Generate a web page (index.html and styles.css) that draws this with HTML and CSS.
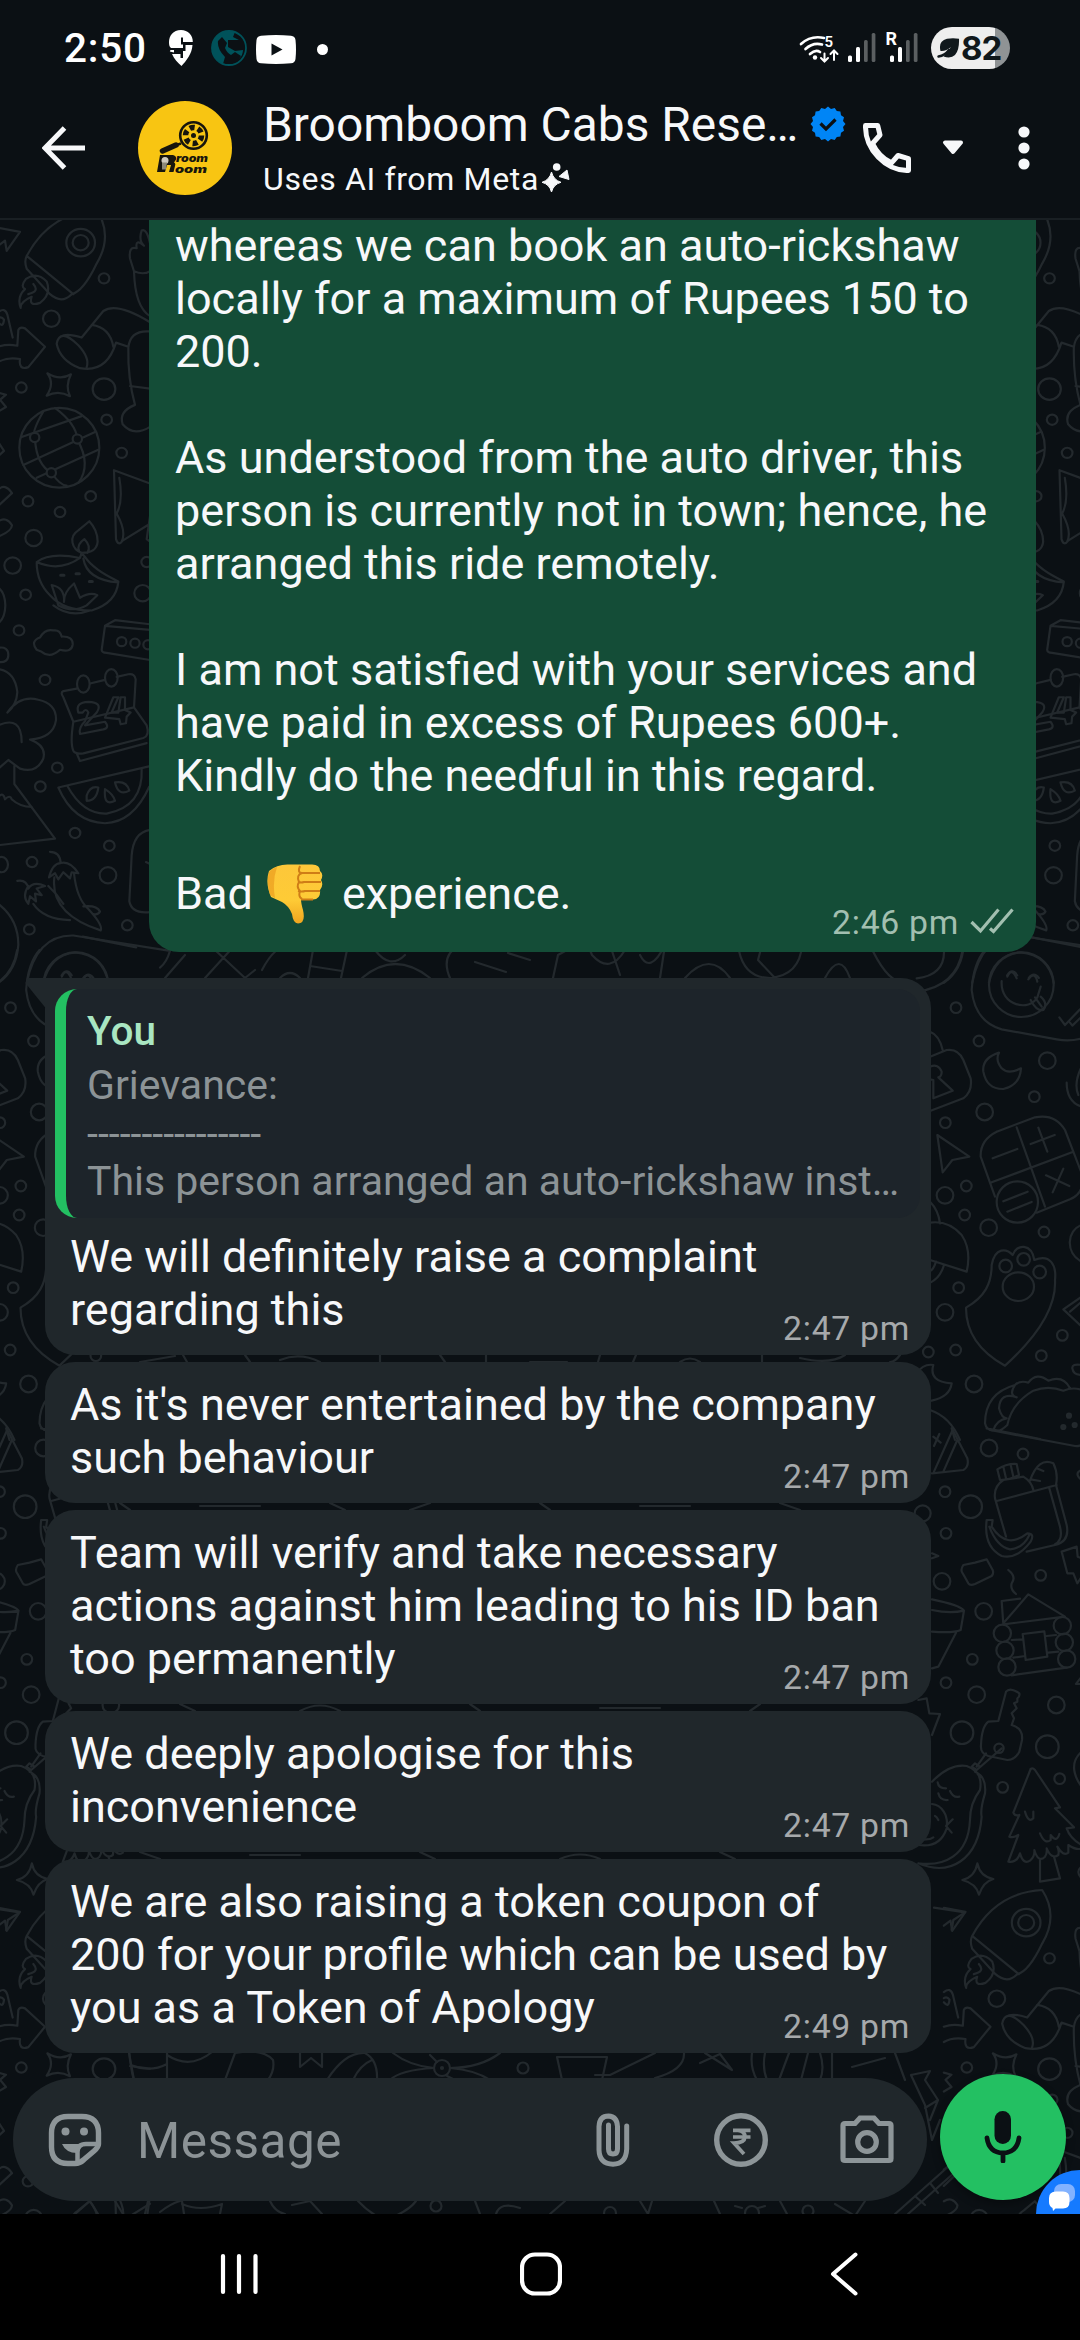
FILE: index.html
```html
<!DOCTYPE html>
<html lang="en">
<head>
<meta charset="utf-8">
<title>Broomboom Cabs Reservation</title>
<link rel="stylesheet" href="styles.css">
</head>
<body>
<div class="statusbar">
  <div class="status-left">
    <span class="clock">2:50</span>
    <svg class="pin" width="24" height="36" viewBox="0 0 24 36"><path d="M12 0C4 0 0 6 0 12c0 4 1 5 2 6h12v-3.500H12V7.500h2v4.500h9.800C24 5 19 0 12 0zM5 22.500V20h-3.500L.8 21.500zM3 24C5 29 9 33 12.500 36 17 31 23 24 23.500 15h-7v6H14v7h-2.500V24z" fill="#fff"/></svg>
    <svg class="dialer" width="36" height="36" viewBox="0 0 36 36"><circle cx="18" cy="18" r="17" fill="none" stroke="#00525a" stroke-width="1.800"/><path d="M18 1A17 17 0 0 0 12 34L14 27Q6 19 7 11L11 7 16 13 14 18Q16 23 20 25L24 22 30 26 28 29Q32 25 32 20L24 21 17 17V10H28L22 7 24 2z" fill="#00525a"/></svg>
    <svg class="tube" width="40" height="29" viewBox="0 0 40 29"><path d="M5 .7Q20-.7 35 .7 39 1 39.500 5q1 9.500 0 19-.5 4-4.500 4.300-15 1.400-30 0Q1 28 .5 24q-1-9.500 0-19Q1 1 5 .7z" fill="#fff"/><path d="M15.500 8.500v12L26.500 14.500z" fill="#0b1014"/></svg>
    <span class="more-dot"></span>
  </div>
  <div class="status-right">
    <svg width="122" height="46" viewBox="0 -6 122 46">
      <g fill="none" stroke="#fff" stroke-width="2.700" stroke-linecap="round"><path d="M2 13Q12 4 25 7M6.500 18Q14 11 23 13.500M11 23q5.500-5 10-2"/><path d="M25.500 22.500v8m-3.500-3.500 3.500 3.500 3.500-3.500M35 29v-9.500m-3.500 3.500 3.500-3.500 3.500 3.500" stroke-width="2"/></g>
      <circle cx="16" cy="26.500" r="2.200" fill="#fff"/>
      <text x="25.500" y="16" class="wifi-gen">5</text>
      <g fill="#fff"><rect x="49" y="24.500" width="4" height="6.500" rx="1.500"/><rect x="57" y="16" width="4" height="15" rx="1.500"/><rect x="91" y="24.500" width="4" height="6.500" rx="1.500"/><rect x="99" y="16" width="4" height="15" rx="1.500"/></g>
      <g fill="#5b5f61"><rect x="65" y="9" width="3.700" height="22" rx="1.500"/><rect x="72.700" y="2" width="3.700" height="29" rx="1.500"/><rect x="107" y="9" width="3.700" height="22" rx="1.500"/><rect x="114.800" y="2" width="3.700" height="29" rx="1.500"/></g>
      <text x="86.500" y="14" class="roaming">R</text>
    </svg>
    <div class="battery">
      <svg width="23" height="20" viewBox="0 0 23 20"><path d="M3.500 13Q1 3 10 .8 16-.5 22 .8 22.500 12 18 17q-4 4-11.500 1.500L14 9Q9 13.500 3.500 13z" fill="#10181c"/><path d="M1.500 18.500Q8 17.500 12 12" fill="none" stroke="#10181c" stroke-width="2.500" stroke-linecap="round"/></svg>
      <span>82</span>
    </div>
  </div>
</div>

<header class="appbar">
  <svg class="back" width="44" height="44" viewBox="0 0 44 44"><path d="M43 22H3.500M22.500 2 3 22l19.500 20" fill="none" stroke="#f7f8fa" stroke-width="5"/></svg>
  <svg class="avatar" width="94" height="94" viewBox="0 0 94 94">
    <circle cx="47" cy="47" r="47" fill="#f8c512"/>
    <circle cx="55.500" cy="34.500" r="13.300" fill="#f8c512" stroke="#17150d" stroke-width="2.600"/>
    <circle cx="55.500" cy="34.500" r="8" fill="none" stroke="#17150d" stroke-width="5.500" stroke-dasharray="5 3.400"/>
    <circle cx="55.500" cy="34.500" r="2.500" fill="#17150d"/>
    <path d="M43 42.500 38.500 44" stroke="#17150d" stroke-width="2.500"/><path d="M38 44 24.500 50" stroke="#17150d" stroke-width="5.500" stroke-linecap="round"/>
    <path d="M22 54h13q4 1 3 4.500l-2 3q2 1 1 3.500l-1.500 6H31l2-7h-4l-2 7h-8z" fill="#17150d"/><circle cx="27" cy="59.500" r="3.500" fill="#cfcabd"/><path d="M24 61.500h5l-1 7h-4z" fill="#8d8978"/>
    <text x="38" y="60.500" class="logo" textLength="32" lengthAdjust="spacingAndGlyphs">room</text><text x="37" y="71.500" class="logo" textLength="32" lengthAdjust="spacingAndGlyphs">oom</text>
  </svg>
  <div class="titles">
    <div class="title-row"><span class="title">Broomboom Cabs Rese…</span>
      <svg width="36" height="36" viewBox="-18 -18 36 36"><path d="M0-17.500 3-15 6.700-16 8.800-13 12.400-12.400 13-8.800 16-6.700 15-3 17.500 0 15 3 16 6.700 13 8.800 12.400 12.400 8.800 13 6.700 16 3 15 0 17.500-3 15-6.700 16-8.800 13-12.400 12.400-13 8.800-16 6.700-15 3-17.500 0-15-3-16-6.700-13-8.800-12.400-12.400-8.800-13-6.700-16-3-15z" fill="#0085f6"/><path d="M-7.500-.5-2 5 7.500-4.500" fill="none" stroke="#0b1014" stroke-width="3.200"/></svg>
    </div>
    <div class="subtitle"><span>Uses AI from Meta</span><svg width="28" height="29" viewBox="0 0 28 29"><path d="M9.500 9Q11.500 17 19 19.300 11.500 21.300 9.500 29 7.500 21.300 0 19.300 7.500 17 9.500 9z" fill="#f7f8fa" stroke="#f7f8fa"/><circle cx="14.700" cy="4" r="3.800" fill="#f7f8fa"/><path d="M25 7 17 13.500 27 16.500z" fill="#f7f8fa" stroke="#f7f8fa" stroke-linejoin="round"/></svg></div>
  </div>
  <svg class="call" width="48" height="50" viewBox="0 0 48 50"><path d="M2.500 2.500h12.200L17 12l-7.500 8.500C13.500 29 20 36 28.500 39.800L35 32.500l10.500 3.200v11.800C23 48 2 27 2.500 2.500z" fill="none" stroke="#f7f8fa" stroke-width="5" stroke-linejoin="round"/></svg>
  <svg class="caret" width="22" height="15" viewBox="0 0 22 15"><path d="M3 2.500h16L11 12z" fill="#f7f8fa" stroke="#f7f8fa" stroke-width="4" stroke-linejoin="round"/></svg>
  <svg class="menu" width="12" height="44" viewBox="0 0 12 44"><g fill="#f7f8fa"><circle cx="6" cy="6" r="5.600"/><circle cx="6" cy="22" r="5.600"/><circle cx="6" cy="38" r="5.600"/></g></svg>
</header>

<main class="chat">
  <svg class="wallpaper" width="1080" height="1994" viewBox="0 220 1080 1994">
    <defs>
      <g id="upper" transform="translate(0 210) scale(.33333 .5102)">
        <path d="M-5 35 60 43 20 80 15 60-5 70M80 90Q150 5 290 0 340 50 290 105 250 160 215 165 185 185 150 165L80 115Q72 100 80 90L220 165M78 135Q110 120 140 140 155 165 120 182 85 190 95 170 60 180 62 192 50 170 75 155 60 150 78 135zM100 145Q120 160 85 165"/>
        <ellipse cx="242" cy="64" rx="43" ry="27"/><ellipse cx="242" cy="64" rx="24" ry="15"/><ellipse cx="312" cy="134" rx="16" ry="10"/><ellipse cx="154" cy="213" rx="25" ry="16"/>
        <path d="M450 65Q440 35 425 40 415 60 432 70 405 55 410 75 385 70 390 95L402 120Q430 128 450 120M402 120Q405 190 450 208"/>
        <path d="M-5 200Q15 190 22 205L38 250M-5 220Q10 232 12 215 5 208-5 212M-5 268Q20 262 52 266L55 235Q60 228 75 232L135 268 85 308Q55 315 60 292 20 288-5 298"/>
        <path d="M170 262Q175 235 245 250L310 198Q350 180 450 220M170 262Q180 295 240 310 320 320 348 260L385 268M275 225Q330 230 340 268M170 262Q180 230 235 265 270 290 260 308M450 238Q390 235 385 270 383 330 405 382 355 395 368 420 400 445 450 425M390 345 450 350"/>
        <path d="M142 320Q180 335 213 322 195 345 210 365 175 352 140 364 165 340 142 320z"/><ellipse cx="64" cy="348" rx="16" ry="10"/><ellipse cx="312" cy="351" rx="34" ry="21"/><ellipse cx="320" cy="411" rx="16" ry="10"/>
        <ellipse cx="178" cy="466" rx="120" ry="78"/><path d="M65 445 245 404M70 500 285 435M110 525 295 470M130 395Q90 440 105 450 110 500 155 515 180 540 200 540M165 388Q230 420 232 450 275 500 235 535"/>
        <g class="joint"><ellipse cx="104" cy="446" rx="14" ry="9"/><ellipse cx="232" cy="449" rx="14" ry="9"/><ellipse cx="154" cy="515" rx="14" ry="9"/></g>
        <path d="M-5 358 18 362 0 372 18 386-5 395M-5 455 12 472-5 482M-5 548Q15 535 36 555L-5 580M-5 610Q20 600 36 618 35 630-5 640M450 536 342 510 348 645Q355 660 368 648L450 615M358 525Q370 570 350 595 380 630 365 650M450 600 440 645 450 650"/>
        <ellipse cx="365" cy="476" rx="16" ry="10"/><ellipse cx="84" cy="571" rx="16" ry="10"/><ellipse cx="272" cy="561" rx="16" ry="10"/><ellipse cx="180" cy="592" rx="16" ry="10"/><ellipse cx="101" cy="643" rx="25" ry="16"/><ellipse cx="38" cy="697" rx="25" ry="16"/><ellipse cx="77" cy="754" rx="16" ry="10"/><ellipse cx="57" cy="824" rx="16" ry="10"/><ellipse cx="440" cy="690" rx="16" ry="10"/><ellipse cx="428" cy="751" rx="25" ry="16"/>
        <path d="M245 672C215 665 205 640 235 628L268 610C285 622 293 635 293 650 290 670 265 672 245 672zM237 668Q230 655 253 645 275 660 262 672M110 690Q150 670 240 682L245 672 255 680Q280 705 355 728 350 770 275 785 190 785 150 755 110 730 110 690zM110 690Q180 710 240 682M250 683Q260 725 355 730M155 735 175 775Q220 790 260 775L292 755Q270 748 240 760L222 732Q190 750 192 768 195 740 155 735zM160 775Q210 800 270 785"/>
        <path d="M182 716h10M228 713h10M268 728h9" stroke-width="3"/>
        <path d="M-5 740Q15 750 16 775 15 800-5 810M-5 858Q25 855 25 872 25 888-5 886M110 862Q90 845 120 838 135 820 160 824 180 822 185 836 220 835 218 852 215 868 180 862 150 880 125 866zM450 812 345 804 315 815 305 862Q305 868 320 868L450 882M315 815 450 823"/>
        <ellipse cx="365" cy="846" rx="14" ry="9"/><ellipse cx="405" cy="849" rx="14" ry="9"/><ellipse cx="444" cy="852" rx="14" ry="9"/><ellipse cx="135" cy="921" rx="16" ry="10"/>
        <path d="M-5 900Q45 905 52 945 50 970 22 985 60 950 115 960 170 968 168 1000 160 1035 90 1038 140 1050 130 1075 110 1105 60 1095L25 1078-5 1095M-5 1010Q65 990 65 1043M43 1090V1125L165 1232-5 1245M-5 1150Q10 1140 15 1155 30 1145 35 1155 60 1170 95 1170"/>
        <path d="M230 938 190 943Q180 945 190 955L220 1003 402 975 407 920Q405 908 385 910L350 915M270 928 315 921M220 1003Q210 1045 220 1060 225 1067 250 1065L430 1035Q450 1030 440 1010L402 975M230 1065 240 1080 440 1045"/><ellipse cx="250" cy="929" rx="19" ry="17"/><ellipse cx="334" cy="917" rx="19" ry="17"/>
        <path d="M235 985Q225 965 265 964 310 965 290 985L255 1010 315 1003Q330 1015 310 1018L240 1027Q235 1015 255 1002L265 985Q258 975 248 985zM340 955 315 995 358 998 362 1008 378 1006 380 993 392 985 375 980V955H362L355 985H335L355 955z"/>
        <ellipse cx="172" cy="1093" rx="16" ry="10"/><ellipse cx="121" cy="1130" rx="16" ry="10"/>
        <path d="M450 1090 175 1132Q220 1200 315 1202 400 1200 448 1130M203 1130Q250 1185 320 1183 430 1170 425 1095M260 1148Q270 1128 295 1132 290 1158 260 1158zM315 1135Q340 1145 345 1158 310 1170 315 1135zM345 1122Q380 1118 388 1138 355 1150 345 1122z"/>
        <ellipse cx="225" cy="1221" rx="16" ry="10"/><ellipse cx="328" cy="1246" rx="16" ry="10"/><ellipse cx="96" cy="1278" rx="16" ry="10"/><ellipse cx="324" cy="1304" rx="25" ry="16"/><ellipse cx="382" cy="1402" rx="16" ry="10"/><ellipse cx="88" cy="1410" rx="16" ry="10"/><ellipse cx="5" cy="1283" rx="19" ry="15"/>
        <path d="M150 1258Q180 1258 182 1280 210 1275 235 1300L215 1298 210 1310 190 1298 175 1312 165 1300 147 1308Q158 1280 182 1280M163 1308Q150 1380 302 1412 310 1402 265 1370 230 1350 222 1300M52 1315Q80 1312 85 1330 100 1315 135 1325L110 1330 125 1343 105 1340 108 1355 90 1345 85 1360Q65 1345 85 1325M100 1360Q130 1390 210 1392M145 1325Q170 1340 190 1360M250 1365Q290 1362 300 1375 295 1382 280 1380M450 1215Q400 1220 395 1265L388 1355Q395 1380 450 1376M438 1278 450 1282M-5 1360Q55 1390 55 1440 50 1490-5 1515M80 1515Q110 1420 220 1422L510 1452Q500 1475 480 1485M130 1515Q150 1460 225 1455 310 1460 325 1515M185 1500Q200 1485 215 1500M250 1505Q265 1492 280 1505"/>
      </g>
      <g id="lower">
        <g transform="translate(920 940) scale(.33333)">
          <path d="M195 30Q160 70 155 150 165 245 245 268L410 298Q450 305 485 295M325-10 485 22"/><circle cx="304" cy="134" r="97"/><path d="M262 110Q275 80 290 115M325 118Q345 92 352 125M245 123C240 200 330 215 352 172L362 140M332 180Q350 215 370 210 385 190 362 170M345 172 365 200M418 232 435 255 480 208M450 248 457 257 485 230"/>
          <path d="M72 30Q75 105-10 115M128 30Q110 140-10 155M30 275Q58 285 68 330M30 350 80 330Q115 325 130 360L152 415Q158 455 130 475L30 513M30 380Q55 370 65 395 65 410 55 412L98 452 40 475 40 420 30 418"/>
          <path d="M237 338Q185 355 190 395 200 448 250 447 300 435 303 385 265 405 245 385 225 360 237 338zM440 428Q440 485 485 500M485 380Q460 430 475 465M52 585 148 650 97 660 68 697z"/>
          <path d="M230 575 345 532Q405 520 435 570L485 700M230 575Q180 600 182 650L225 770M290 562 375 800M215 727 458 636M350 818 450 778Q480 765 485 740M218 655 292 627M332 612 404 585M355 563 382 635M378 706 448 738M430 686 398 757M250 784 323 755M262 815 335 786"/><circle cx="292" cy="786" r="62"/>
          <path d="M30 785Q55 810 60 850M30 848Q85 840 125 885 155 930 140 995L30 960M72 975Q60 1015 30 1028M48 965Q40 990 30 993M485 855C440 870 435 940 485 965M485 1070 430 1108 485 1160M485 1085 450 1115M485 1275Q455 1270 457 1285 460 1305 485 1305"/>
          <path d="M138 1103C195 1070 215 1030 215 975 225 920 260 925 278 945 290 910 335 910 343 960 390 940 410 975 405 1020 410 1110 340 1200 255 1277 170 1230 138 1170 138 1103z"/><ellipse cx="295" cy="1040" rx="47" ry="43"/><circle cx="257" cy="978" r="19"/><circle cx="311" cy="958" r="19"/><circle cx="359" cy="996" r="19"/>
          <path d="M-10 1300Q10 1270 40 1275 25 1325 95 1330 90 1370 35 1382M30 1410Q90 1430 120 1500M95 1465 105 1500M485 1350Q460 1340 430 1352 385 1335 340 1352 275 1390 262 1455 235 1480 225 1470 200 1475 195 1450 195 1360 285 1335 300 1320 325 1328 350 1295 385 1322 430 1305 450 1345M285 1335Q265 1365 290 1372 240 1355 237 1405 245 1435 260 1435 230 1440 220 1470M200 1465 360 1497"/>
          <g class="crumb"><circle cx="447" cy="1427" r="6"/><circle cx="430" cy="1461" r="6"/><circle cx="464" cy="1455" r="6"/></g>
          <circle cx="108" cy="203" r="16"/><circle cx="177" cy="303" r="16"/><circle cx="382" cy="362" r="25"/><circle cx="343" cy="470" r="16"/><circle cx="194" cy="516" r="25"/><circle cx="76" cy="548" r="16"/><circle cx="139" cy="738" r="16"/><circle cx="75" cy="766" r="25"/><circle cx="134" cy="825" r="16"/><circle cx="206" cy="863" r="25"/><circle cx="372" cy="876" r="16"/><circle cx="116" cy="1043" r="16"/><circle cx="75" cy="1117" r="25"/><circle cx="427" cy="1186" r="16"/><circle cx="107" cy="1230" r="16"/><circle cx="25" cy="1236" r="16"/><circle cx="364" cy="1247" r="16"/><circle cx="162" cy="1332" r="25"/>
        </g>
        <g transform="translate(920 1430) scale(.33333)">
          <path d="M210 0 465 48Q480 50 490 40M98 0 142 85Q148 110 130 120L36 130M98 0 42 125M112 30 70 125M40 20 62 38M58 12 42 48"/>
          <path d="M225 205 258 320M225 205Q220 170 250 150L310 140Q335 155 340 180M230 213 410 165M232 118Q260 100 290 102L297 135Q270 150 240 150zM250 110 258 145M272 104 280 140M330 152Q355 80 400 100 415 130 408 165L440 285Q450 335 405 345L320 365M388 175 420 290Q430 330 405 343M350 115 370 123M332 148 360 153"/>
          <path d="M200 270H218L215 290Q260 360 322 310 345 310 332 335 290 390 245 378 190 350 200 270zM208 290Q230 350 270 358 310 355 328 315"/>
          <path d="M130 405Q120 420 128 430L145 460Q150 468 165 462L215 438Q222 430 218 420L200 388 165 398zM265 420Q290 440 275 460 270 478 288 492M470 350 425 365 442 430 460 430 472 460 485 440M470 350 473 380 485 385M36 370 55 378 36 385"/>
          <path d="M36 508Q120 525 132 542L122 600Q100 610 36 605M36 540Q90 552 132 542M108 608 55 710 36 715M250 580 325 493 435 560 250 583 245 513 300 506M275 630 308 628M280 683 315 678M380 618 408 615M385 668 415 665M275 736 440 713M308 612 373 604 382 680 317 690z"/>
          <circle cx="247" cy="610" r="26"/><circle cx="255" cy="661" r="26"/><circle cx="261" cy="711" r="26"/><circle cx="427" cy="587" r="26"/><circle cx="433" cy="637" r="26"/><circle cx="440" cy="687" r="26"/>
          <path d="M-5 810 20 805 28 850 60 852 36 915M-5 1245Q60 1255 80 1195M80 1190 95 1208M98 1168 78 1188M80 1190C85 1155 65 1125 36 1122M36 1055Q90 1000 140 1008 190 1025 180 1080 150 1120 150 1170C145 1280 70 1310-5 1300M165 1025Q200 1040 195 1090 180 1140 185 1160C175 1290 90 1340-5 1300M53 1057Q55 1075 78 1075M55 1090Q60 1112 83 1110M90 1083Q100 1105 118 1100M45 1158Q50 1160 55 1170M10 1228Q30 1230 40 1222"/>
          <path d="M235 873 258 785Q270 770 298 790 300 800 292 805L292 815 282 820 290 835 275 850 282 865 275 885Q310 895 306 930L298 965Q285 990 262 990L205 978Q180 970 183 945 185 890 205 875L235 873zM245 955 170 1020 155 1010 165 1000 180 1010M198 970 170 1010"/><circle cx="237" cy="955" r="14"/>
          <path d="M332 1017 280 1148Q285 1160 298 1155L268 1220Q280 1225 295 1215L265 1295Q290 1300 300 1270 310 1305 330 1292 345 1280 343 1260 355 1300 375 1280 382 1270 380 1255 395 1290 415 1275 418 1260 412 1250 430 1280 445 1268L445 1245Q470 1262 485 1255"/>
          <path d="M485 1245Q450 1225 440 1195L462 1192 405 1135 420 1132 345 1020Q338 1012 332 1017M360 1290V1355L420 1345 402 1280M315 1145Q325 1180 340 1165V1145M360 1210Q375 1245 392 1230V1215Q410 1240 418 1212M485 965Q445 1000 475 1055L485 1070"/>
          <path d="M172 1300Q180 1340 220 1347 190 1355 177 1394 168 1360 127 1350 165 1340 172 1300zM42 1433 135 1447 100 1470 95 1500M485 740 468 762 485 762M485 1310Q465 1325 485 1345M485 120Q460 130 485 150"/>
          <circle cx="207" cy="54" r="25"/><circle cx="309" cy="72" r="16"/><circle cx="75" cy="185" r="16"/><circle cx="152" cy="230" r="34"/><circle cx="8" cy="250" r="24"/><circle cx="78" cy="310" r="16"/><circle cx="66" cy="454" r="25"/><circle cx="362" cy="436" r="16"/><circle cx="191" cy="544" r="25"/><circle cx="157" cy="688" r="16"/><circle cx="78" cy="758" r="16"/><circle cx="170" cy="794" r="25"/><circle cx="409" cy="825" r="25"/><circle cx="126" cy="908" r="34"/><circle cx="382" cy="950" r="34"/><circle cx="248" cy="1072" r="16"/><circle cx="419" cy="1046" r="16"/>
        </g>
      </g>
    </defs>
    <g class="doodle">
      <use href="#upper"/><use href="#upper" x="945.500"/><use href="#upper" y="1680"/><use href="#upper" x="945.500" y="1680"/>
      <use href="#lower"/><use href="#lower" x="-945.500"/>
      <!-- motifs that peek out between the bubbles -->
      <path d="M165 978 185 955M205 978 235 945M215 950 245 978 255 970M308 978 313 950M341 978 347 950M310 966 342 971M262 970Q275 945 290 945M280 978Q290 968 300 978M362 978Q395 950 430 978M375 950Q390 970 405 955M450 978Q440 955 460 945M475 962 506 972M508 953 530 960M553 978 558 955 585 940M588 945 592 955Q610 975 625 950L650 942M610 945 620 975M640 955Q650 975 665 945L660 978M685 978Q710 950 730 978M739 951Q745 978 770 978 800 975 802 945M762 945 758 960 775 978M825 978Q840 950 850 978M870 945Q885 978 900 982"/>
      <path d="M140 1362 175 1356M183 1355 187 1362M250 1362 245 1355M280 1360Q300 1352 320 1362M380 1355V1362M440 1355 445 1362M486 1355V1362M530 1362 567 1362M600 1355 598 1362M633 1362 636 1355M680 1362Q690 1355 700 1362M762 1355V1362M800 1358Q830 1365 845 1355M900 1355Q895 1362 890 1362M120 1503 130 1510M200 1506H260M330 1503 345 1510M410 1510 430 1503M540 1503 550 1510M640 1506H690M780 1503 800 1510M180 1704 195 1711M300 1711Q320 1700 340 1711M470 1704 480 1711M600 1708H660M760 1704 750 1711M140 1852 160 1859M250 1855H300M420 1852 435 1859M560 1859Q580 1850 600 1859M720 1852 735 1859"/>
      <path d="M129 2053 134 2080M167 2053V2080M131 2065Q150 2073 167 2064M167 2055Q190 2070 212 2052M225 2080 235 2053Q262 2048 273 2060 275 2070 268 2080M300 2053V2067L311 2058 322 2067V2053M327 2080Q345 2052 365 2053 378 2060 377 2080M353 2080Q360 2065 372 2060M393 2053Q410 2066 434 2068 400 2070 390 2080M500 2053Q480 2068 450 2068 475 2070 490 2080M437 2062 430 2055M447 2076 455 2080M557 2057H607L602 2080M557 2057 562 2080M595 2075H610L655 2053M655 2078Q685 2070 684 2053M705 2053 732 2070 720 2054 700 2063M752 2053Q750 2068 757 2080M765 2053Q762 2068 767 2080M789 2053 779 2080M808 2053 801 2080M820 2053Q825 2068 820 2080M832 2053V2080M852 2067 885 2058M895 2053 905 2080"/>
      <circle cx="442" cy="2068" r="8"/><circle cx="442" cy="2068" r="1"/><circle cx="523" cy="2068" r="5.500"/>
      <path d="M75 2214 90 2201 98 2214M115 2201 123 2214M148 2201 145 2214M160 2212Q170 2204 180 2201M182 2201 184 2214M182 2204Q200 2212 222 2204L220 2214M270 2201Q275 2212 285 2214M292 2205 310 2201 322 2214M358 2201Q370 2214 385 2220 408 2212 416 2201M475 2201 480 2214M496 2214Q500 2201 520 2208M550 2214 565 2201M640 2201 648 2214 652 2201M714 2201 720 2214M780 2201 787 2214M735 2206 742 2208M765 2206 758 2208M835 2204 855 2216 865 2201"/>
      <circle cx="436" cy="2206" r="5.500"/><circle cx="610" cy="2213" r="6"/><circle cx="752" cy="2213" r="7"/><circle cx="808" cy="2211" r="5.500"/>
      <path d="M895 2214 950 2165M908 2214 955 2172M915 2196 925 2205M930 2183 938 2193M911 2075 930 2071 925 2080 938 2100 930 2120M911 2075 925 2105 932 2140 940 2120M925 2108 938 2100"/>
    </g>
  </svg>

  <div class="messages">
    <div class="bubble out">
      <p>whereas we can book an auto-rickshaw<br>locally for a maximum of Rupees 150 to<br>200.</p>
      <p>As understood from the auto driver, this<br>person is currently not in town; hence, he<br>arranged this ride remotely.</p>
      <p>I am not satisfied with your services and<br>have paid in excess of Rupees 600+.<br>Kindly do the needful in this regard.</p>
      <p class="emoji-line">Bad
        <svg width="56" height="61" viewBox="0 0 56 61">
          <defs><linearGradient id="skin" x1="0" y1="0" x2="0" y2="1"><stop offset="0" stop-color="#fdc73a"/><stop offset=".6" stop-color="#fecb36"/><stop offset="1" stop-color="#f0a51f"/></linearGradient></defs>
          <path d="M2 8Q10 1 22 1.500H44Q53 1 53 8 57 11 54 17 57 22 53 27 54 36 46 36.500H34Q34 40 36 47 39 60 31 60.500 26 60 25 51 22 43 15 39L4 34Q-2 20 2 8z" fill="url(#skin)"/>
          <path d="M2 9Q6 5 10 4 5 18 8 35L3 32Q-1 20 2 9z" fill="#e8961b" opacity=".6"/>
          <path d="M33 3Q30 10 35 10H53M32 19Q34 20 37 19H54M31 28Q35 29 38 28H53M34 36.500H46M35 10Q29 12 32 19 29 24 33 28 31 34 35 36" fill="none" stroke="#cf7d16" stroke-width="2"/>
        </svg>
        experience.</p>
      <span class="time">2:46 pm <svg width="44" height="28" viewBox="0 0 44 28"><path d="M1.500 15 10.500 24 28.500 2.500M20 21.500 23.500 24.500 42.500 2.500" fill="none" stroke="#a2bfb0" stroke-width="3.200"/></svg></span>
    </div>

    <div class="bubble in first">
      <svg class="tail" width="20" height="32" viewBox="0 0 20 32"><path d="M3 0H20V30.500L1 7Q-1.500 2 3 0z" fill="#20272b"/></svg>
      <div class="quote">
        <div class="who">You</div>
        <div>Grievance:</div>
        <div class="rule">----------------</div>
        <div>This person arranged an auto-rickshaw inst…</div>
      </div>
      <p>We will definitely raise a complaint<br>regarding this</p><span class="time">2:47 pm</span>
    </div>
    <div class="bubble in"><p>As it's never entertained by the company<br>such behaviour</p><span class="time">2:47 pm</span></div>
    <div class="bubble in"><p>Team will verify and take necessary<br>actions against him leading to his ID ban<br>too permanently</p><span class="time">2:47 pm</span></div>
    <div class="bubble in"><p>We deeply apologise for this<br>inconvenience</p><span class="time">2:47 pm</span></div>
    <div class="bubble in"><p>We are also raising a token coupon of<br>200 for your profile which can be used by<br>you as a Token of Apology</p><span class="time">2:49 pm</span></div>
  </div>

  <div class="composer">
    <div class="field">
      <svg class="sticker" width="54" height="54" viewBox="0 0 54 54"><g fill="none" stroke="#8d9598" stroke-width="5.400"><path d="M50.500 31V20Q50.500 3.500 34 3.500H20Q3.500 3.500 3.500 20V34Q3.500 50.500 20 50.500H27Q32 50.500 36 46.500L46 38Q50.500 34 50.500 31z"/><path d="M29.500 50V39Q29.500 31 38 31H50" stroke-width="4.500"/></g><circle cx="17.500" cy="18.500" r="4" fill="#8d9598"/><circle cx="36" cy="18.500" r="4" fill="#8d9598"/><path d="M14 31H35Q30 34 29 40 18 40 14 31z" fill="#8d9598"/></svg>
      <span class="placeholder">Message</span>
      <svg class="clip" width="34" height="54" viewBox="0 0 34 54"><path d="M30.700 13V36Q30 51 17 51.200 3.500 51 3 37V13.500Q3.500 3 12.500 3 21 3.500 21.500 13.500V36Q21.500 41 17 41 12.500 41 12.500 36V12" fill="none" stroke="#8d9598" stroke-width="5" stroke-linecap="round"/></svg>
      <svg class="rupee" width="54" height="54" viewBox="0 0 54 54"><circle cx="27" cy="27" r="24.300" fill="none" stroke="#8d9598" stroke-width="5.400"/><path d="M19 17.300H36.500M19 24H36.500M19 17.300H24Q31 18 31 24 30.500 30 20 30L30 41" fill="none" stroke="#8d9598" stroke-width="3.700"/></svg>
      <svg class="camera" width="54" height="49" viewBox="0 0 54 49"><path d="M5 8.500H15L20 3H34L39 8.500H49Q51 8.500 51 10.500V43.500Q51 45.500 49 45.500H5Q3 45.500 3 43.500V10.500Q3 8.500 5 8.500z" fill="none" stroke="#8d9598" stroke-width="5.200"/><circle cx="27" cy="27" r="9.300" fill="none" stroke="#8d9598" stroke-width="5.200"/></svg>
    </div>
    <div class="mic"><svg width="38" height="52" viewBox="0 0 38 52"><rect x="10.500" y="0" width="16.500" height="33" rx="8.200" fill="#0b1014"/><path d="M3 27Q5 41.500 19 42 33 41.500 35 27M19 42V50" fill="none" stroke="#0b1014" stroke-width="4.800" stroke-linecap="round"/></svg></div>
  </div>
  <div class="bubble-head"><svg width="27" height="28" viewBox="0 0 27 28"><rect x="5" y="0" width="21" height="18" rx="7" fill="#82b2ff"/><path d="M7 7.500H14Q20.500 7.500 20.500 14V18Q20.500 24.500 14 24.500H6.500L4 27 3.500 24Q0 22 0 18V14Q0 7.500 7 7.500z" fill="#fff"/></svg></div>
</main>

<nav class="navbar">
  <svg class="recents" width="38" height="42" viewBox="0 0 38 42"><path d="M3 3V39M19 3V39M35.500 3V39" stroke="#fff" stroke-width="4.200" stroke-linecap="round"/></svg>
  <svg class="home" width="42" height="44" viewBox="0 0 42 44"><rect x="2" y="2.500" width="38" height="39" rx="13" fill="none" stroke="#fff" stroke-width="4.200"/></svg>
  <svg class="prev" width="28" height="44" viewBox="0 0 28 44"><path d="M25.500 2.500 3 22 25.500 41.500" fill="none" stroke="#fff" stroke-width="4" stroke-linecap="round" stroke-linejoin="round"/></svg>
</nav>
</body>
</html>
```
FILE: styles.css
```css
* { box-sizing: border-box; }
body { margin: 0; width: 1080px; height: 2340px; display: flex; flex-direction: column; background: #0b1014; color: #f7f8fa; font-family: Roboto, "Noto Sans", sans-serif; overflow: hidden; }
svg { display: block; flex: none; }
p { margin: 0; }

.statusbar { height: 96px; flex: none; display: flex; align-items: center; justify-content: space-between; padding: 0 70px 0 64px; }
.status-left, .status-right { display: flex; align-items: center; }
.clock { width: 105px; font-size: 40.500px; font-weight: 500; line-height: 48px; letter-spacing: .8px; color: #fff; }
.dialer { margin-left: 18px; }
.tube { margin: 2px 0 0 9px; }
.more-dot { width: 11px; height: 11px; border-radius: 50%; background: #fff; margin: 2px 0 0 21px; }
.wifi-gen { font: 600 15px Roboto, sans-serif; fill: #fff; }
.roaming { font: 700 18px Roboto, sans-serif; fill: #fff; }
.battery { width: 79px; height: 42px; border-radius: 21px; margin-left: 10px; padding-left: 6px; display: flex; align-items: center; gap: 1px; background: linear-gradient(90deg, #eee 64px, #8f9395 64px); color: #10181c; font: 700 33px Inter, sans-serif; letter-spacing: -1px; }

.appbar { height: 124px; flex: none; display: flex; border-bottom: 2px solid #191f23; }
.back { margin: 30px 0 0 42px; }
.avatar { margin: 5px 0 0 52px; }
.logo { font: italic 900 10.500px Inter, sans-serif; fill: #17150d; }
.titles { width: 583px; margin-left: 31px; }
.title-row { display: flex; align-items: center; gap: 12px; height: 57px; margin-top: 1px; white-space: nowrap; }
.title { font-size: 47.900px; line-height: 57px; }
.title-row svg { margin-top: -4px; }
.subtitle { display: flex; height: 40px; font-size: 32px; line-height: 40px; letter-spacing: .65px; margin-top: 5px; white-space: nowrap; }
.subtitle svg { margin: 4px 0 0 3px; }
.call { margin: 27px 0 0 17px; }
.caret { margin: 44px 0 0 31px; }
.menu { margin: 30px 0 0 54px; }

.chat { position: relative; height: 1994px; flex: none; display: flex; flex-direction: column; overflow: hidden; }
.wallpaper { position: absolute; inset: 0; }
.doodle, .doodle use { fill: none; stroke: #23292d; stroke-width: 2.200; stroke-linejoin: round; stroke-linecap: round; }
.wallpaper path, .wallpaper circle, .wallpaper ellipse { vector-effect: non-scaling-stroke; }
.joint { fill: #0b1014; }
.crumb { fill: #23292d; }

.messages { position: relative; flex: 1; min-height: 0; display: flex; flex-direction: column; justify-content: flex-end; overflow: hidden; }
.bubble { position: relative; flex: none; border-radius: 30px; font-size: 45px; line-height: 53px; white-space: nowrap; }
.out { align-self: flex-end; width: 887px; margin: 0 44px 26.500px 0; padding: 0 26px 20.500px; border-radius: 0 0 30px 30px; background: #144d37; }
.out p + p { margin-top: 53px; }
.emoji-line { display: flex; align-items: center; line-height: 77px; height: 76px; }
.emoji-line svg { margin: 0 19px 0 14px; }
.in { align-self: flex-start; width: 886px; margin: 0 0 7px 45px; padding: 16px 25px 19px; background: #20272b; }
.in:last-child { margin-bottom: 0; }
.first { padding-top: 11px; border-top-left-radius: 0; }
.tail { position: absolute; left: -19px; top: 0; }
.time { position: absolute; right: 21px; bottom: 6px; display: flex; font-size: 33.750px; line-height: 40px; letter-spacing: .7px; color: #a6a9ab; }
.out .time { right: 22px; bottom: 9px; color: #a2bfb0; }
.out .time svg { margin: 4px 0 0 11px; }
.quote { margin: 0 -14px 12px -15px; height: 229px; padding: 12px 0 0 21px; border-left: 11px solid #23c062; border-radius: 22px; background: #1d242a; color: #8c9396; font-size: 41px; line-height: 48px; }
.who { font-size: 40.500px; line-height: 60px; font-weight: 500; color: #a9e6c2; }
.rule { font-size: 39.400px; height: 48px; line-height: 50px; }

.composer { position: relative; flex: none; height: 161px; display: flex; padding: 25px 14px 13px 13px; justify-content: space-between; align-items: flex-end; }
.field { width: 914px; height: 123px; border-radius: 62px; background: #20272b; display: flex; align-items: center; }
.sticker { margin-left: 35px; }
.placeholder { width: 459px; margin: 2px 0 0 35px; font-size: 49.500px; letter-spacing: .5px; color: #8c9396; }
.rupee { margin-left: 84px; }
.camera { margin-left: 72px; }
.mic { width: 126px; height: 126px; margin-bottom: 1px; border-radius: 50%; background: #23c062; display: flex; align-items: center; justify-content: center; box-shadow: 0 4px 8px rgba(0,0,0,.35); }
.bubble-head { position: absolute; left: 1036px; top: 1950px; width: 88px; height: 88px; border-radius: 50%; background: #157aff; padding: 14px 0 0 13px; }

.navbar { flex: 1; background: #000; display: flex; align-items: center; }
.recents { margin-left: 220px; margin-bottom: 6px; }
.home { margin-left: 262px; margin-bottom: 6px; }
.prev { margin-left: 268px; margin-bottom: 6px; }
```
